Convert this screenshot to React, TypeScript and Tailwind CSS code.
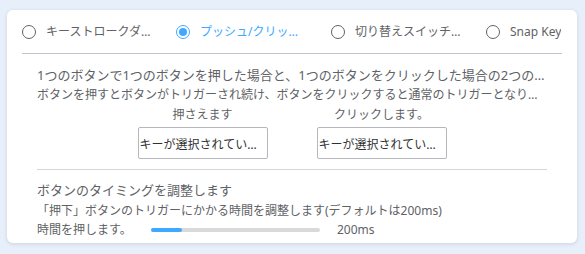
import React, { useState } from 'react';

const tabs = ['キーストロークダイナミクス', 'プッシュ/クリックモード', '切り替えスイッチモード', 'Snap Key'];
const tabWidths = ['w-[154px]', 'w-[155px]', 'w-[155px]', 'w-auto'];

const Radio: React.FC<{ checked: boolean }> = ({ checked }) => (
  <span
    className={`flex items-center justify-center w-[14px] h-[14px] rounded-full border-[1.5px] shrink-0 ${
      checked ? 'border-[#40a9ff]' : 'border-[#606266]'
    }`}
  >
    {checked && <span className="w-[8px] h-[8px] rounded-full bg-[#40a9ff]"></span>}
  </span>
);

const KeyBox: React.FC<{ label: string }> = ({ label }) => (
  <div className="w-[130px] flex flex-col items-center text-[12px]">
    <div className="leading-[20px] text-center whitespace-nowrap">{label}</div>
    <div className="mt-[2px] w-[130px] h-[32px] border border-[#b4b7bd] rounded-[2px] bg-white flex items-center pt-[4px] pl-[1px] text-[#303133] overflow-hidden">
      <span className="truncate">キーが選択されていません</span>
    </div>
  </div>
);

const App: React.FC = () => {
  const [active, setActive] = useState(1);
  const value = 200;
  return (
    <div
      className="w-[585px] h-[254px] bg-[#e7effb] pt-[10px] pl-[7px] text-[13px] text-[#606266]"
      style={{ fontFamily: '"Noto Sans", "Noto Sans CJK JP", sans-serif' }}
    >
      <div className="w-[570px] h-[233px] bg-white rounded-[6px] shadow-[0_1px_4px_rgba(0,0,0,0.12)] px-[15px]">
        {/* Mode tabs */}
        <div className="flex items-center h-[44px] border-b border-[#c0c4cc] text-[12px]">
          {tabs.map((t, i) => (
            <button
              key={t}
              onClick={() => setActive(i)}
              className={`flex items-center gap-[10px] ${tabWidths[i]} shrink-0 ${
                active === i ? 'text-[#40a9ff]' : 'text-[#606266]'
              }`}
            >
              <Radio checked={active === i} />
              <span className="truncate max-w-[107px] leading-[20px]">{t}</span>
            </button>
          ))}
        </div>

        {/* Push / click settings */}
        <div className="px-[15px]">
          <div className="pt-[12px] pb-[10px] border-b border-[#d4d6da]">
            <div className="truncate leading-[19px]">
              1つのボタンで1つのボタンを押した場合と、1つのボタンをクリックした場合の2つのトリガーを設定できます
            </div>
            <div className="truncate leading-[19px] text-[12px]">
              ボタンを押すとボタンがトリガーされ続け、ボタンをクリックすると通常のトリガーとなります。
            </div>
            <div className="flex justify-center gap-[49px] mt-[1px]">
              <KeyBox label="押さえます" />
              <KeyBox label="クリックします。" />
            </div>
          </div>

          {/* Timing */}
          <div className="pt-[11px]">
            <div className="leading-[19.5px]">ボタンのタイミングを調整します</div>
            <div className="leading-[19.5px] text-[12px]">「押下」ボタンのトリガーにかかる時間を調整します(デフォルトは200ms)</div>
            <div className="flex items-center leading-[19.5px] text-[12px]">
              <span className="w-[114px]">時間を押します。</span>
              <div className="w-[169px] h-[4px] rounded-full bg-[#d9d9d9]">
                <div className="h-[4px] rounded-full bg-[#40a9ff]" style={{ width: `${(value / 1100) * 100}%` }}></div>
              </div>
              <span className="ml-[17px]">{value}ms</span>
            </div>
          </div>
        </div>
      </div>
    </div>
  );
};

export default App;
